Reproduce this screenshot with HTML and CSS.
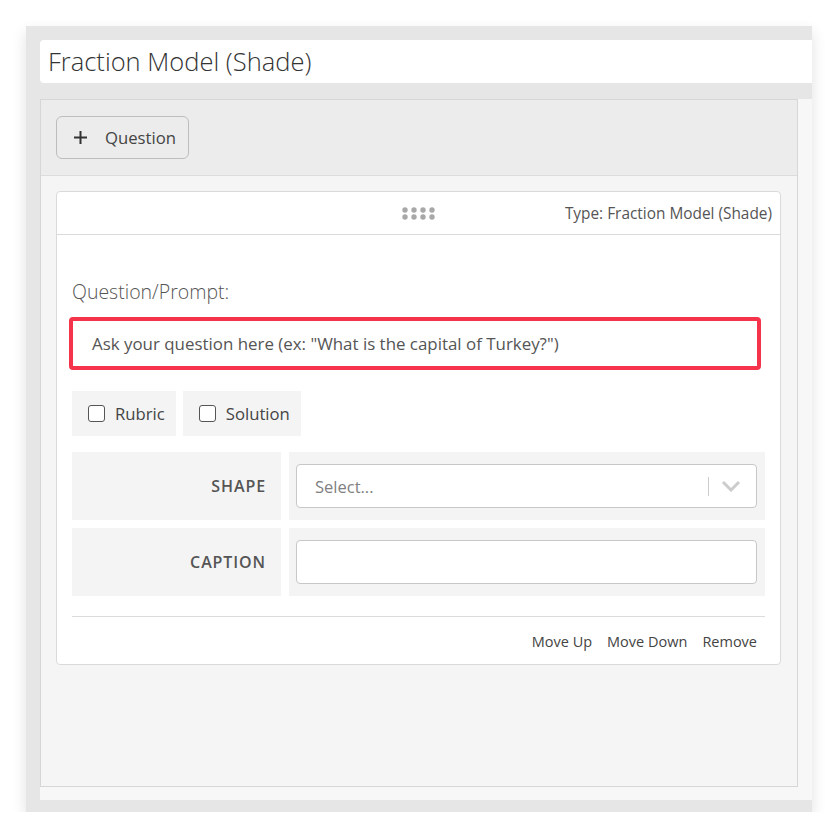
FILE: index.html
```html
<!DOCTYPE html>
<html lang="en">
<head>
    <meta charset="UTF-8">
    <meta name="viewport" content="width=device-width, initial-scale=1.0">
    <title>Fraction Model (Shade)</title>
    <link rel="stylesheet" href="styles.css">
</head>
<body>
    <div class="frame">
        <div class="title-input">Fraction Model (Shade)</div>
        <div class="scroll-area">
            <div class="panel">
                <div class="panel-top">
                    <button class="add-btn">
                        <svg class="plus" width="15" height="15" viewBox="0 0 15 15"><path d="M7.5 1v13M1 7.5h13" stroke="#333" stroke-width="2" fill="none"/></svg>
                        <span>Question</span>
                    </button>
                </div>
                <div class="panel-body">
                    <div class="card">
                        <div class="card-header">
                            <svg class="drag" width="34" height="13" viewBox="0 0 34 13">
                                <circle cx="3" cy="3" r="2.7"/><circle cx="12" cy="3" r="2.7"/><circle cx="21" cy="3" r="2.7"/><circle cx="30" cy="3" r="2.7"/>
                                <circle cx="3" cy="10" r="2.7"/><circle cx="12" cy="10" r="2.7"/><circle cx="21" cy="10" r="2.7"/><circle cx="30" cy="10" r="2.7"/>
                            </svg>
                            <span class="type">Type: Fraction Model (Shade)</span>
                        </div>
                        <div class="card-body">
                            <div class="prompt-label">Question/Prompt:</div>
                            <div class="prompt-input">Ask your question here (ex: "What is the capital of Turkey?")</div>
                            <div class="checks">
                                <label class="check"><span class="box"></span>Rubric</label>
                                <label class="check"><span class="box"></span>Solution</label>
                            </div>
                            <div class="field-row">
                                <div class="field-label">SHAPE</div>
                                <div class="field-value">
                                    <div class="select">
                                        <span class="placeholder">Select...</span>
                                        <span class="sep"></span>
                                        <svg width="20" height="12" viewBox="0 0 20 12"><path d="M2 2l8 8 8-8" stroke="#ccc" stroke-width="3" fill="none"/></svg>
                                    </div>
                                </div>
                            </div>
                            <div class="field-row">
                                <div class="field-label">CAPTION</div>
                                <div class="field-value">
                                    <div class="text-input"></div>
                                </div>
                            </div>
                            <div class="actions">
                                <span>Move Up</span>
                                <span>Move Down</span>
                                <span>Remove</span>
                            </div>
                        </div>
                    </div>
                </div>
            </div>
        </div>
    </div>
</body>
</html>
```

FILE: styles.css
```css
body {
    margin: 0;
    background-color: white;
    font-family: "Open Sans", Arial, sans-serif;
    color: #444;
}
.frame {
    width: 772px;
    height: 760px;
    margin: 26px 0 0 26px;
    padding: 14px 0 12px 14px;
    background-color: #e6e6e6;
    box-shadow: 0 6px 14px rgba(0, 0, 0, 0.12);
    overflow: hidden;
}
.title-input {
    height: 43px;
    padding-left: 8px;
    background-color: white;
    border-radius: 4px 0 0 4px;
    font-size: 25.5px;
    font-weight: 300;
    line-height: 43px;
    color: #333;
}
.scroll-area {
    margin-top: 16px;
    height: 701px;
    background-color: #f7f7f7;
}
.panel {
    width: 756px;
    height: 686px;
    border: 1px solid #d6d6d6;
    background-color: #f5f5f5;
}
.panel-top {
    height: 43px;
    padding: 16px 15px;
    background-color: #ececec;
    border-bottom: 1px solid #dcdcdc;
}
.add-btn {
    display: flex;
    align-items: center;
    gap: 17px;
    height: 43px;
    width: 133px;
    padding: 0 8px 0 16px;
    background-color: #ececec;
    border: 1px solid #bdbdbd;
    border-radius: 6px;
    font-family: inherit;
    font-size: 16.7px;
    color: #444;
}
.plus {
    flex-shrink: 0;
}
.panel-body {
    padding: 15px;
}
.card {
    width: 723px;
    height: 472px;
    background-color: white;
    border: 1px solid #dadada;
    border-radius: 4px;
}
.card-header {
    position: relative;
    display: flex;
    align-items: center;
    justify-content: flex-end;
    height: 42px;
    padding-right: 8px;
    border-bottom: 1px solid #dadada;
}
.drag {
    position: absolute;
    left: 345px;
    top: 15px;
    fill: #a8a8a8;
}
.type {
    font-size: 15.4px;
    color: #555;
}
.card-body {
    padding: 44px 15px 0 15px;
}
.prompt-label {
    font-size: 19.5px;
    font-weight: 300;
    color: #555;
    line-height: 26px;
}
.prompt-input {
    margin: 12px 4px 0 -3px;
    height: 45px;
    padding-left: 19px;
    border: 4px solid #f5334a;
    border-radius: 4px;
    font-size: 16.9px;
    line-height: 45px;
    color: #555;
}
.checks {
    display: flex;
    gap: 7px;
    margin-top: 21px;
}
.check {
    display: flex;
    align-items: center;
    gap: 10px;
    height: 45px;
    padding: 0 11px 0 16px;
    background-color: #f4f4f4;
    font-size: 16.7px;
    color: #444;
}
.box {
    width: 15px;
    height: 15px;
    border: 1.5px solid #555;
    border-radius: 3px;
    background-color: white;
}
.field-row {
    display: flex;
    gap: 8px;
    margin-top: 16px;
}
.field-row + .field-row {
    margin-top: 8px;
}
.field-label {
    width: 194px;
    height: 68px;
    padding-right: 15px;
    background-color: #f4f4f4;
    text-align: right;
    line-height: 68px;
    font-size: 16px;
    font-weight: 600;
    letter-spacing: 0.9px;
    color: #555;
}
.field-value {
    flex: 1;
    padding: 12px 8px 12px 7px;
    background-color: #f4f4f4;
}
.select, .text-input {
    height: 42px;
    background-color: white;
    border: 1px solid #c8c8c8;
    border-radius: 4px;
}
.select {
    display: flex;
    align-items: center;
    padding: 0 15px 0 18px;
}
.placeholder {
    flex: 1;
    font-size: 16.5px;
    color: #808080;
}
.sep {
    width: 1px;
    height: 19px;
    margin-right: 12px;
    background-color: #ccc;
}
.actions {
    display: flex;
    justify-content: flex-end;
    gap: 15px;
    margin-top: 20px;
    padding: 15px 8px 0 0;
    border-top: 1px solid #dcdcdc;
    font-size: 14.5px;
    color: #444;
}
```
